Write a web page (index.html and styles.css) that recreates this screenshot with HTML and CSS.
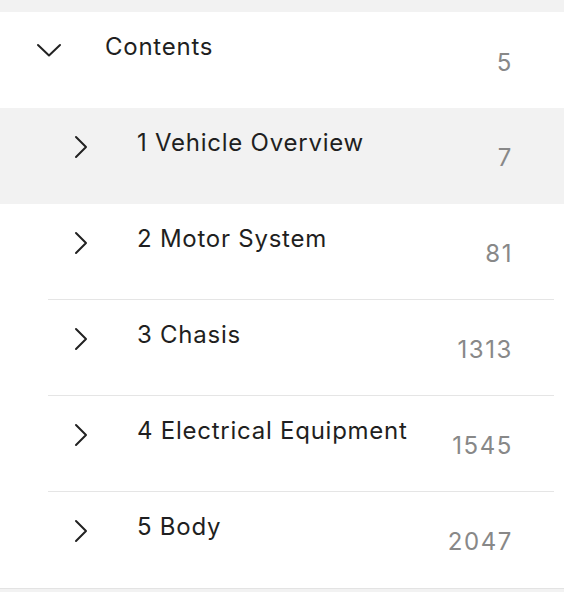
FILE: index.html
```html
<!DOCTYPE html>
<html lang="en">
<head>
  <meta charset="UTF-8" />
  <meta name="viewport" content="width=device-width, initial-scale=1" />
  <title>Contents</title>
  <link rel="stylesheet" href="styles.css">
</head>
<body>
  <div class="tree">
    <div class="node root">
      <div class="node-body">
        <span class="toggle">
          <svg width="26" height="16" viewBox="0 0 26 16"><path d="M2 3 L13 13.5 L24 3" fill="none" stroke="#222" stroke-width="2" stroke-linecap="round" stroke-linejoin="round"/></svg>
        </span>
        <span class="title">Contents</span>
        <span class="count">5</span>
      </div>
    </div>

    <div class="children">
      <div class="node active">
        <div class="node-body">
          <span class="toggle">
            <svg width="16" height="26" viewBox="0 0 16 26"><path d="M3 3 L13 13 L3 23" fill="none" stroke="#222" stroke-width="2" stroke-linecap="round" stroke-linejoin="round"/></svg>
          </span>
          <span class="title">1 Vehicle Overview</span>
          <span class="count">7</span>
        </div>
      </div>
      <div class="node">
        <div class="node-body">
          <span class="toggle">
            <svg width="16" height="26" viewBox="0 0 16 26"><path d="M3 3 L13 13 L3 23" fill="none" stroke="#222" stroke-width="2" stroke-linecap="round" stroke-linejoin="round"/></svg>
          </span>
          <span class="title">2 Motor System</span>
          <span class="count">81</span>
        </div>
      </div>
      <div class="node">
        <div class="node-body">
          <span class="toggle">
            <svg width="16" height="26" viewBox="0 0 16 26"><path d="M3 3 L13 13 L3 23" fill="none" stroke="#222" stroke-width="2" stroke-linecap="round" stroke-linejoin="round"/></svg>
          </span>
          <span class="title">3 Chasis</span>
          <span class="count">1313</span>
        </div>
      </div>
      <div class="node">
        <div class="node-body">
          <span class="toggle">
            <svg width="16" height="26" viewBox="0 0 16 26"><path d="M3 3 L13 13 L3 23" fill="none" stroke="#222" stroke-width="2" stroke-linecap="round" stroke-linejoin="round"/></svg>
          </span>
          <span class="title">4 Electrical Equipment</span>
          <span class="count">1545</span>
        </div>
      </div>
      <div class="node last">
        <div class="node-body">
          <span class="toggle">
            <svg width="16" height="26" viewBox="0 0 16 26"><path d="M3 3 L13 13 L3 23" fill="none" stroke="#222" stroke-width="2" stroke-linecap="round" stroke-linejoin="round"/></svg>
          </span>
          <span class="title">5 Body</span>
          <span class="count">2047</span>
        </div>
      </div>
    </div>
  </div>
</body>
</html>
```

FILE: styles.css
```css
body {
  margin: 0;
  padding: 0;
  background-color: #f2f2f2;
  font-family: Inter, "Noto Sans", Arial, sans-serif;
  color: #1f1f21;
}

.tree {
  padding-top: 12px;
  padding-bottom: 4px;
}

.children {
  border-bottom: 1px solid #e3e3e3;
}

.node {
  background-color: #fff;
  height: 96px;
}

.node.active {
  background-color: #f2f2f2;
}

.node-body {
  display: flex;
  height: 100%;
  box-sizing: border-box;
  margin-left: 48px;
  margin-right: 10px;
  border-bottom: 1px solid #e5e5e5;
}

.root .node-body {
  margin-left: 16px;
  border-bottom: none;
}

.node.active .node-body,
.node.last .node-body {
  border-bottom-color: transparent;
}

.toggle {
  width: 89px;
  flex-shrink: 0;
  display: flex;
  align-items: flex-start;
  padding-top: 26px;
  padding-left: 25px;
  box-sizing: border-box;
}

.root .toggle {
  padding-top: 30px;
  padding-left: 20px;
}

.title {
  flex: 1;
  font-size: 24px;
  letter-spacing: 0.75px;
  line-height: 30px;
  padding-top: 20px;
}

.count {
  align-self: center;
  font-size: 24px;
  letter-spacing: 1.6px;
  color: #888;
  padding-right: 41px;
  padding-top: 4px;
}
```
